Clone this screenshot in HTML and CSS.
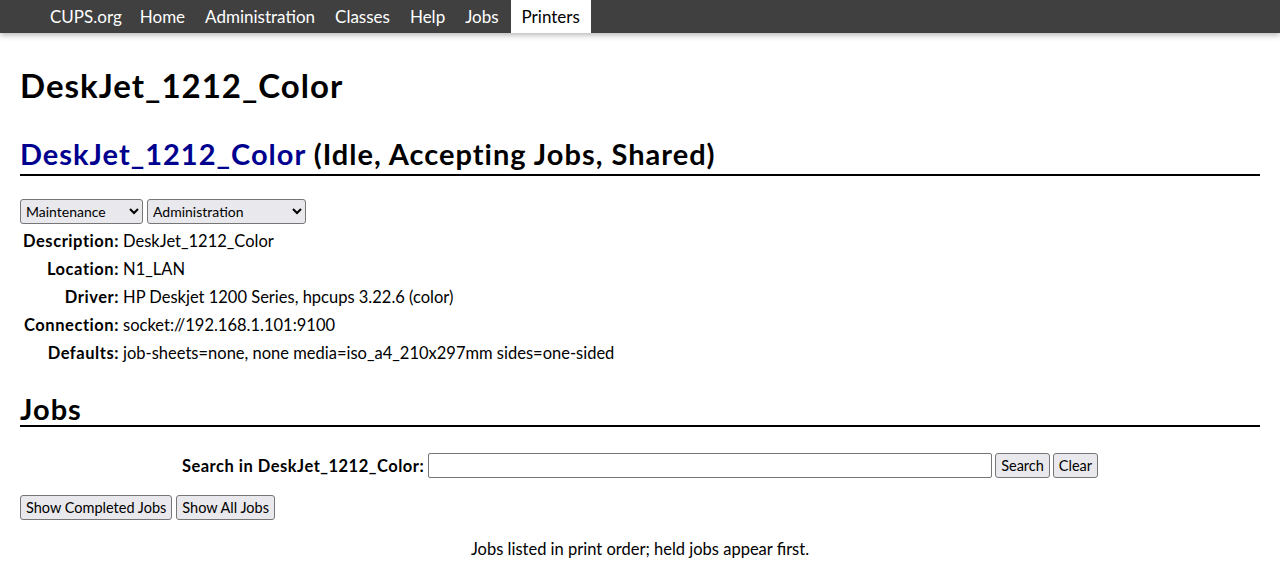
FILE: index.html
```html
<!DOCTYPE html>
<html>
<head>
<meta charset="utf-8">
<title>DeskJet_1212_Color - CUPS</title>
<link rel="stylesheet" href="styles.css">
</head>
<body>
<header class="header">
  <ul class="nav">
    <li><a href="#">CUPS.org</a></li>
    <li><a href="#">Home</a></li>
    <li><a href="#">Administration</a></li>
    <li><a href="#">Classes</a></li>
    <li><a href="#">Help</a></li>
    <li><a href="#">Jobs</a></li>
    <li class="active"><a href="#">Printers</a></li>
  </ul>
</header>
<main class="body">
  <h1 class="title">DeskJet_1212_Color</h1>
  <h2 class="title2"><a href="#" class="plink">DeskJet_1212_Color</a> (Idle, Accepting Jobs, Shared)</h2>
  <div class="actions">
    <select class="sel sel-maint"><option>Maintenance</option></select>
    <select class="sel sel-admin"><option>Administration</option></select>
  </div>
  <table class="info">
    <tr><th>Description:</th><td>DeskJet_1212_Color</td></tr>
    <tr><th>Location:</th><td>N1_LAN</td></tr>
    <tr><th>Driver:</th><td>HP Deskjet 1200 Series, hpcups 3.22.6 (color)</td></tr>
    <tr><th>Connection:</th><td>socket://192.168.1.101:9100</td></tr>
    <tr><th>Defaults:</th><td>job-sheets=none, none media=iso_a4_210x297mm sides=one-sided</td></tr>
  </table>
  <h2 class="title2 jobs">Jobs</h2>
  <form class="search">
    <label class="search-label">Search in DeskJet_1212_Color:</label>
    <input class="search-input" type="text">
    <button class="btn" type="button">Search</button>
    <button class="btn" type="button">Clear</button>
  </form>
  <div class="showbtns">
    <button class="btn" type="button">Show Completed Jobs</button>
    <button class="btn" type="button">Show All Jobs</button>
  </div>
  <p class="note">Jobs listed in print order; held jobs appear first.</p>
</main>
</body>
</html>
```
FILE: styles.css
```css
html, body {
  margin: 0;
  padding: 0;
  background: #fff;
}
body {
  font-family: "Source Sans Pro", Lato, "Liberation Sans", sans-serif;
  font-size: 16.5px;
  color: #000;
}
.header {
  background: #404040;
  height: 33px;
  box-shadow: 0 2px 6px rgba(0,0,0,0.3);
}
.nav {
  list-style: none;
  margin: 0;
  padding: 0 0 0 40px;
  display: flex;
  height: 33px;
}
.nav li a {
  display: block;
  height: 33px;
  line-height: 33px;
  padding: 0 10px;
  color: #fff;
  text-decoration: none;
  font-size: 17px;
}
.nav li:nth-child(2) a {
  padding-left: 8px;
}
.nav li:nth-child(6) a {
  padding-right: 12px;
}
.nav li.active a {
  background: #fff;
  color: #000;
  padding: 0 11px;
}
.body {
  padding: 0 20px 20px 20px;
}
.title {
  font-size: 33px;
  letter-spacing: 1px;
  font-weight: bold;
  margin: 32px 0 0 0;
  line-height: 40px;
}
.title2 {
  font-size: 29px;
  letter-spacing: 1px;
  font-weight: bold;
  margin: 32px 0 0 0;
  line-height: 34px;
  padding-bottom: 3px;
  border-bottom: 2px solid #000;
}
.plink {
  color: #00008f;
  text-decoration: none;
}
.actions {
  margin-top: 23px;
  display: flex;
  gap: 4px;
}
.sel {
  font-family: inherit;
  font-size: 14px;
  height: 25px;
  border: 1px solid #767676;
  border-radius: 3px;
  background: #e9e9ed;
  color: #000;
  padding: 0 1px;
}
.sel-maint { width: 123px; }
.sel-admin { width: 159px; }
.info {
  border-collapse: collapse;
  margin: 3px 0 0 1px;
}
.info th {
  text-align: right;
  font-weight: bold;
  letter-spacing: 0.55px;
  padding: 2px;
  height: 24px;
  white-space: nowrap;
}
.info td {
  padding: 2px 2px 2px 2px;
  height: 24px;
}
.title2.jobs {
  margin-top: 26px;
  line-height: 32px;
  padding-bottom: 0;
}
.search {
  margin-top: 26px;
  display: flex;
  justify-content: center;
  align-items: center;
  gap: 3px;
}
.search-label {
  font-weight: bold;
  letter-spacing: 0.5px;
  margin-right: 1px;
}
.search-input {
  width: 560px;
  height: 21px;
  border: 1px solid #767676;
  border-radius: 2px;
  padding: 1px;
  font-family: inherit;
}
.btn {
  font-family: inherit;
  font-size: 14.5px;
  height: 25px;
  border: 1px solid #767676;
  border-radius: 3px;
  background: #e9e9ed;
  color: #000;
  padding: 0 5px;
}
.showbtns {
  margin-top: 17px;
  display: flex;
  gap: 4px;
}
.note {
  text-align: center;
  margin: 19px 0 0 0;
}
```
